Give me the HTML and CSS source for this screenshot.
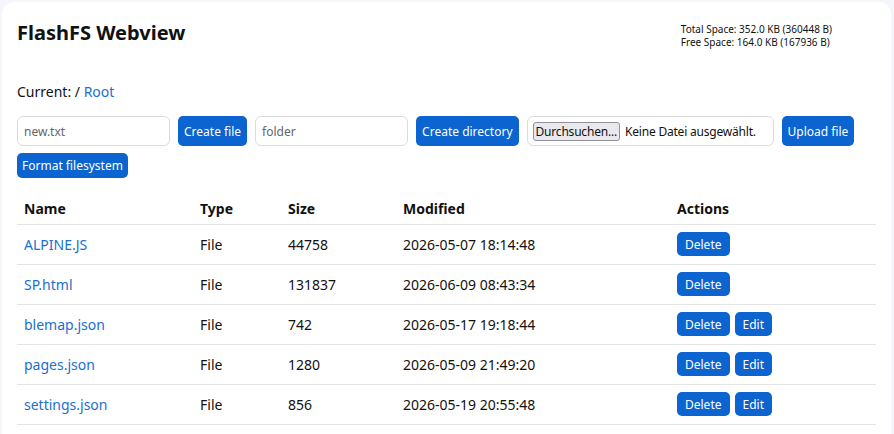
FILE: index.html
```html
<!DOCTYPE html>
<html lang="en">

<head>
    <meta charset="UTF-8">
    <meta name="viewport" content="width=device-width, initial-scale=1.0">
    <title>FlashFS Webview</title>
    <link rel="stylesheet" href="styles.css">
</head>

<body>
    <div class="card">
        <div class="header">
            <h1>FlashFS Webview</h1>
            <div class="space">
                <div>Total Space: 352.0 KB (360448 B)</div>
                <div>Free Space: 164.0 KB (167936 B)</div>
            </div>
        </div>

        <p class="current">Current: / <a href="#">Root</a></p>

        <div class="controls">
            <input class="field" type="text" placeholder="new.txt">
            <button class="btn">Create file</button>
            <input class="field" type="text" placeholder="folder">
            <button class="btn">Create directory</button>
            <label class="file-box">
                <span class="file-btn">Durchsuchen...</span>
                <span class="file-text">Keine Datei ausgewählt.</span>
            </label>
            <button class="btn">Upload file</button>
        </div>
        <div class="controls second">
            <button class="btn small">Format filesystem</button>
        </div>

        <table class="files">
            <thead>
                <tr>
                    <th class="c-name">Name</th>
                    <th class="c-type">Type</th>
                    <th class="c-size">Size</th>
                    <th class="c-mod">Modified</th>
                    <th>Actions</th>
                </tr>
            </thead>
            <tbody>
                <tr>
                    <td><a href="#">ALPINE.JS</a></td>
                    <td>File</td>
                    <td>44758</td>
                    <td>2026-05-07 18:14:48</td>
                    <td><button class="btn act">Delete</button></td>
                </tr>
                <tr>
                    <td><a href="#">SP.html</a></td>
                    <td>File</td>
                    <td>131837</td>
                    <td>2026-06-09 08:43:34</td>
                    <td><button class="btn act">Delete</button></td>
                </tr>
                <tr>
                    <td><a href="#">blemap.json</a></td>
                    <td>File</td>
                    <td>742</td>
                    <td>2026-05-17 19:18:44</td>
                    <td><button class="btn act">Delete</button><button class="btn act">Edit</button></td>
                </tr>
                <tr>
                    <td><a href="#">pages.json</a></td>
                    <td>File</td>
                    <td>1280</td>
                    <td>2026-05-09 21:49:20</td>
                    <td><button class="btn act">Delete</button><button class="btn act">Edit</button></td>
                </tr>
                <tr>
                    <td><a href="#">settings.json</a></td>
                    <td>File</td>
                    <td>856</td>
                    <td>2026-05-19 20:55:48</td>
                    <td><button class="btn act">Delete</button><button class="btn act">Edit</button></td>
                </tr>
            </tbody>
        </table>
    </div>
</body>

</html>
```

FILE: styles.css
```css
* {
    margin: 0px;
    padding: 0px;
    box-sizing: border-box;
}

body {
    background-color: #f5f6fa;
    font-family: "Noto Sans", "Open Sans", sans-serif;
    font-size: 14px;
    color: #111;
    padding: 2px 3px 0 2px;
}

.card {
    background-color: #fff;
    border-radius: 12px;
    padding: 18px 15px 20px 15px;
}

.header {
    display: flex;
    justify-content: space-between;
    height: 60px;
}

h1 {
    font-size: 20px;
    font-weight: bold;
    line-height: 26px;
}

.space {
    font-size: 10px;
    line-height: 13px;
    margin-top: 3px;
    margin-right: 44px;
    white-space: nowrap;
}

.current {
    line-height: 24px;
    margin-bottom: 12px;
}

a {
    color: #1a6fd0;
    text-decoration: none;
}

.controls {
    display: flex;
    gap: 8px;
    align-items: stretch;
}

.second {
    margin-top: 7px;
}

.field {
    width: 153px;
    height: 30px;
    border: 1px solid #dcdcdc;
    border-radius: 6px;
    padding: 0 6px;
    font-family: inherit;
    font-size: 12px;
    color: #333;
}

.field::placeholder {
    color: #666;
}

.btn {
    background-color: #0b64cf;
    color: #fff;
    border: none;
    border-radius: 5px;
    font-family: inherit;
    font-size: 12px;
    padding: 0 6px;
    white-space: nowrap;
}

.small {
    height: 25px;
    padding: 0 5px;
}

.file-box {
    width: 247px;
    height: 30px;
    border: 1px solid #dcdcdc;
    border-radius: 6px;
    display: flex;
    align-items: center;
    padding: 0 5px;
    font-size: 12px;
    color: #111;
    white-space: nowrap;
    overflow: hidden;
}

.file-btn {
    background-color: #e9e9ed;
    border: 1px solid #8f8f9d;
    border-radius: 3px;
    padding: 0 2px;
    line-height: 17px;
    margin-right: 5px;
    letter-spacing: -0.2px;
}

.file-text {
    letter-spacing: -0.2px;
}

.files {
    width: 100%;
    border-collapse: collapse;
    margin-top: 16px;
}

.files th {
    text-align: left;
    font-weight: bold;
    height: 30px;
    padding: 0 7px;
    border-bottom: 1px solid #e4e4e4;
}

.files td {
    height: 40px;
    padding: 0 7px;
    border-bottom: 1px solid #e4e4e4;
}

.c-name { width: 176px; }
.c-type { width: 88px; }
.c-size { width: 115px; }
.c-mod { width: 274px; }

.act {
    height: 24px;
    padding: 0 8px;
    margin-right: 5px;
}
```
